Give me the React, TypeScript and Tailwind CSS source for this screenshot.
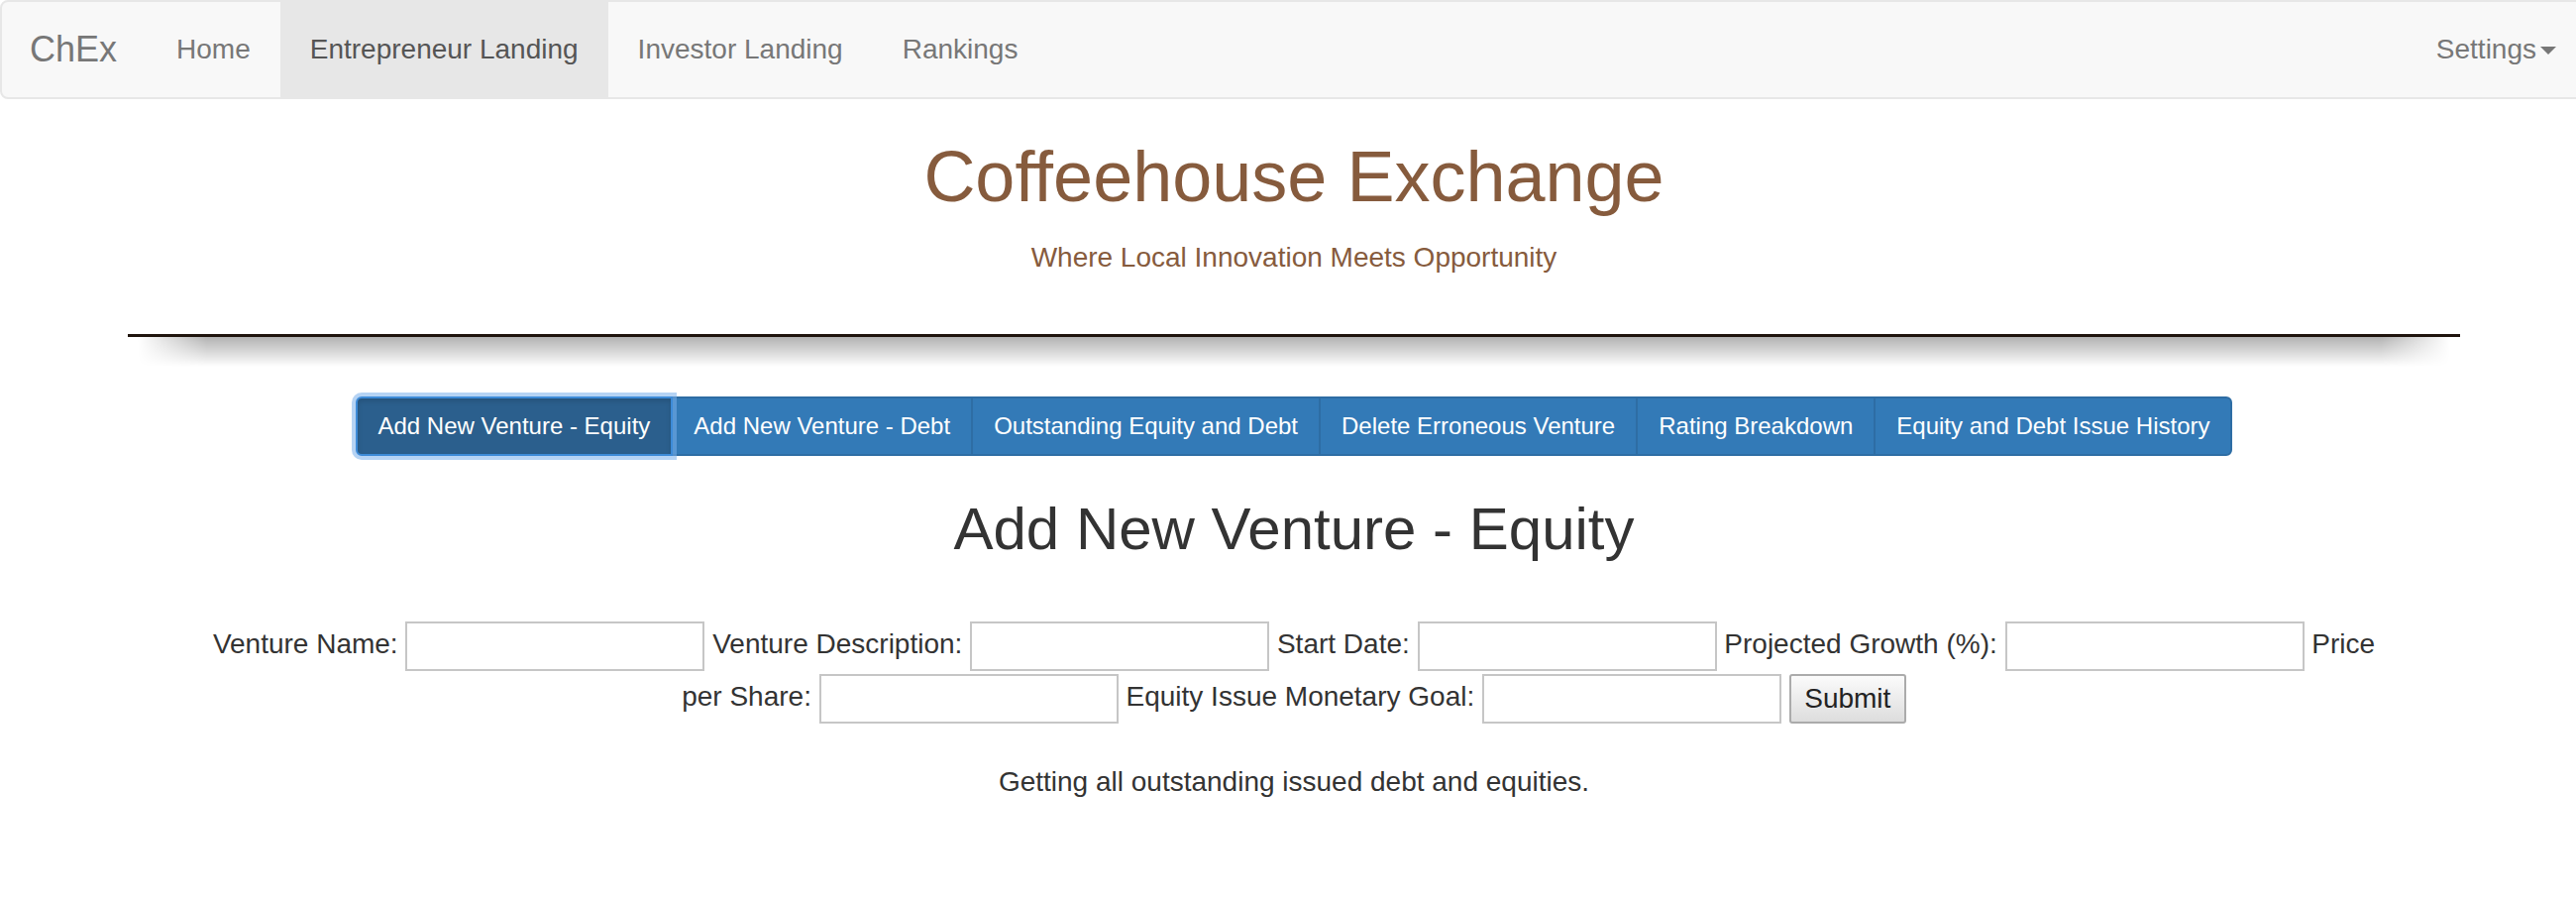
import React from "react";

const buttons = [
  "Add New Venture - Equity",
  "Add New Venture - Debt",
  "Outstanding Equity and Debt",
  "Delete Erroneous Venture",
  "Rating Breakdown",
  "Equity and Debt Issue History",
];

function Field({ label }: { label: string }) {
  return (
    <>
      {label}{" "}
      <input
        type="text"
        className="inline-block align-middle w-[302px] h-[50px] border-2 border-[#c6c6c6] bg-white px-1"
      />{" "}
    </>
  );
}

export default function App() {
  return (
    <div className="w-full min-h-[908px] overflow-hidden bg-white font-['Liberation_Sans',Arial,sans-serif] text-[#333]">
      <div className="w-[2612px]">
        <nav className="h-[100px] border-2 border-[#e7e7e7] rounded-lg bg-[#f8f8f8] flex items-stretch text-[28px] text-[#777]">
          <div className="flex items-center pl-[28px] pr-[30px] text-[36px]">ChEx</div>
          <div className="flex items-center px-[30px]">Home</div>
          <div className="flex items-center px-[30px] bg-[#e7e7e7] text-[#555]">Entrepreneur Landing</div>
          <div className="flex items-center px-[30px]">Investor Landing</div>
          <div className="flex items-center px-[30px]">Rankings</div>
          <div className="ml-auto flex items-center px-[30px]">
            Settings
            <span className="ml-[4px] mt-[2px] inline-block w-0 h-0 border-t-[8px] border-x-[8px] border-x-transparent border-t-[#777]" />
          </div>
        </nav>

        <div className="text-center">
          <h1 className="mt-[38px] text-[72px] leading-[80px] text-[#865b3d]">Coffeehouse Exchange</h1>
          <p className="mt-[22px] text-[28px] leading-[40px] text-[#865b3d]">
            Where Local Innovation Meets Opportunity
          </p>

          <div className="relative mx-[129px] mt-[57px]">
            <div className="h-[3px] bg-[#1f140d]" />
            <div className="absolute left-0 right-0 top-[3px] h-[30px] bg-linear-to-b from-black/30 to-transparent [mask-image:linear-gradient(to_right,transparent_10px,black_80px,black_calc(100%_-_80px),transparent_calc(100%_-_10px))]" />
          </div>

          <div className="mt-[60px] inline-flex">
            {buttons.map((b, i) => (
              <div
                key={b}
                className={
                  i === 0
                    ? "relative z-10 flex items-center h-[60px] px-[21px] text-[24px] text-white border-2 border-[#3d8bd8] bg-[#2b5f8d] rounded-l-[6px] shadow-[0_0_0_4px_rgba(120,175,235,0.55),inset_0_3px_5px_rgba(0,0,0,0.125)]"
                    : i === buttons.length - 1
                    ? "relative flex items-center h-[60px] px-[21px] text-[24px] text-white border-2 border-[#2e6da4] bg-[#337ab7] -ml-[2px] rounded-r-[6px]"
                    : "relative flex items-center h-[60px] px-[21px] text-[24px] text-white border-2 border-[#2e6da4] bg-[#337ab7] -ml-[2px]"
                }
              >
                {b}
              </div>
            ))}
          </div>

          <h2 className="mt-[41px] text-[60px] leading-[66px] text-[#333]">Add New Venture - Equity</h2>

          <div className="mt-[56px] text-[28px] text-[#333]">
            <div className="h-[53px] leading-[53px] whitespace-nowrap">
              <Field label="Venture Name:" />
              <Field label="Venture Description:" />
              <Field label="Start Date:" />
              <Field label="Projected Growth (%):" />
              Price
            </div>
            <div className="h-[53px] leading-[53px] whitespace-nowrap">
              <Field label="per Share:" />
              <Field label="Equity Issue Monetary Goal:" />
              <button
                type="button"
                className="inline-block align-middle w-[118px] h-[50px] border-2 border-[#ababab] rounded-[3px] bg-linear-to-b from-[#fbfbfb] to-[#dddddd] text-[28px] leading-[46px] text-[#222]"
              >
                Submit
              </button>
            </div>
          </div>

          <p className="mt-[40px] text-[28px] leading-[40px] text-[#333]">
            Getting all outstanding issued debt and equities.
          </p>
        </div>
      </div>
    </div>
  );
}
